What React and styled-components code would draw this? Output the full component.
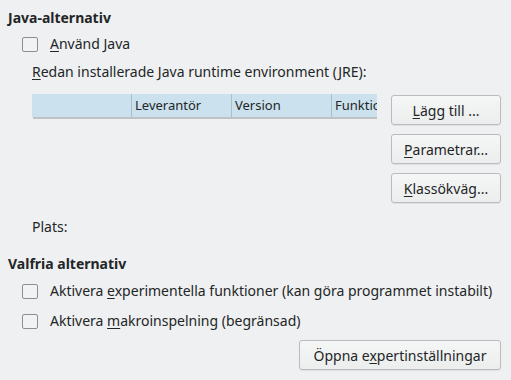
import React from "react";
import styled, { createGlobalStyle } from "styled-components";

const Global = createGlobalStyle`
  html, body {
    margin: 0;
    padding: 0;
    background: #eff0f1;
  }
  body {
    font-family: "Noto Sans", "DejaVu Sans", sans-serif;
    font-size: 14px;
    color: #232627;
  }
`;

const Page = styled.div`
  width: 511px;
  height: 380px;
  padding: 8px 10px 0 8px;
  box-sizing: border-box;
  display: flex;
  flex-direction: column;
`;

const Heading = styled.h2`
  margin: ${(p) => p.$top || 0}px 0 0 0;
  font-size: 14px;
  font-weight: 700;
  line-height: 19px;
`;

const CheckRow = styled.label`
  display: flex;
  align-items: flex-start;
  gap: 12px;
  margin: ${(p) => p.$top || 0}px 0 0 14px;
  line-height: 19px;
`;

const Box = styled.span`
  width: 14px;
  height: 13px;
  margin-top: 3px;
  border: 1px solid #8c8e90;
  border-radius: 2px;
  background: #f1f2f3;
  flex: none;
`;

const Key = styled.span`
  text-decoration: underline;
  text-underline-offset: 2px;
`;

const Indent = styled.div`
  margin-left: 24px;
  display: flex;
  flex-direction: column;
`;

const Label = styled.div`
  line-height: 19px;
  margin-top: ${(p) => p.$top || 0}px;
`;

const ListRow = styled.div`
  display: flex;
  gap: 14px;
  margin-top: 13px;
`;

const List = styled.div`
  flex: 1;
  overflow: hidden;
  padding-bottom: 3px;
`;

const Header = styled.div`
  display: flex;
  height: 23px;
  background: #cbe2ee;
  box-shadow: 1px 2px 0 #bfc1c2;
  font-size: 13px;
`;

const Col = styled.div`
  width: ${(p) => p.$w}px;
  flex: none;
  box-sizing: border-box;
  padding-left: 3px;
  line-height: 23px;
  white-space: nowrap;
  overflow: hidden;
  border-left: ${(p) => (p.$first ? "none" : "1px solid #a9bfca")};
`;

const Buttons = styled.div`
  width: 110px;
  display: flex;
  flex-direction: column;
  gap: 9px;
  margin-top: 1px;
`;

const Button = styled.button`
  height: 30px;
  width: ${(p) => (p.$w ? `${p.$w}px` : "100%")};
  box-sizing: border-box;
  border: 1px solid #b9bbbd;
  border-radius: 3px;
  background: linear-gradient(#f5f6f6, #eceded);
  box-shadow: 0 1px 0 rgba(0, 0, 0, 0.06);
  font-family: inherit;
  font-size: 14px;
  color: #232627;
  padding: 0 6px;
  white-space: nowrap;
`;

const Footer = styled.div`
  display: flex;
  justify-content: flex-end;
  margin-top: 10px;
`;

export default function App() {
  return (
    <Page>
      <Global />
      <Heading>Java-alternativ</Heading>
      <CheckRow $top={7}>
        <Box />
        <span>
          <Key>A</Key>nvänd Java
        </span>
      </CheckRow>
      <Indent>
        <Label $top={9}>
          <Key>R</Key>edan installerade Java runtime environment (JRE):
        </Label>
        <ListRow>
          <List>
            <Header>
              <Col $w={99} $first />
              <Col $w={100}>Leverantör</Col>
              <Col $w={100}>Version</Col>
              <Col $w={47}>Funktioner</Col>
            </Header>
          </List>
          <Buttons>
            <Button>
              <Key>L</Key>ägg till ...
            </Button>
            <Button>
              <Key>P</Key>arametrar...
            </Button>
            <Button>
              <Key>K</Key>lassökväg...
            </Button>
          </Buttons>
        </ListRow>
        <Label $top={14}>Plats:</Label>
      </Indent>
      <Heading $top={18}>Valfria alternativ</Heading>
      <CheckRow $top={8}>
        <Box />
        <span>
          Aktivera <Key>e</Key>xperimentella funktioner (kan göra programmet instabilt)
        </span>
      </CheckRow>
      <CheckRow $top={11}>
        <Box />
        <span>
          Aktivera <Key>m</Key>akroinspelning (begränsad)
        </span>
      </CheckRow>
      <Footer>
        <Button $w={202}>
          Öppna e<Key>x</Key>pertinställningar
        </Button>
      </Footer>
    </Page>
  );
}
